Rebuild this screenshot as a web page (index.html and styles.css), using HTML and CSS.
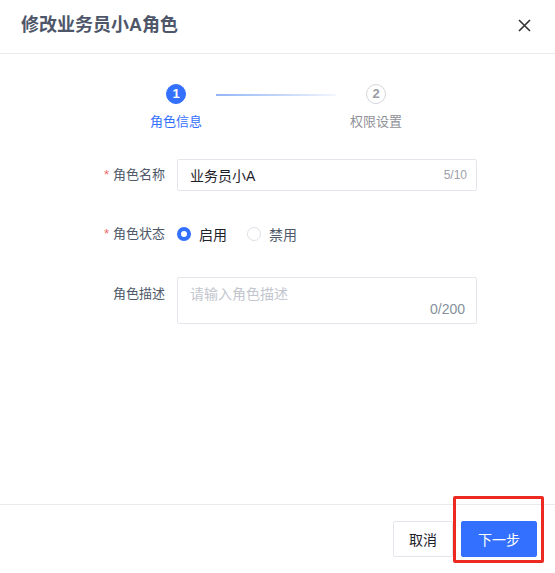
FILE: index.html
```html
<!DOCTYPE html>
<html lang="zh-CN">
<head>
<meta charset="utf-8">
<title>修改业务员小A角色</title>
<link rel="stylesheet" href="styles.css">
</head>
<body>
<div class="dialog">
  <header class="dlg-header">
    <h1 class="dlg-title">修改业务员小A角色</h1>
    <button class="dlg-close" aria-label="关闭">
      <svg width="13" height="13" viewBox="0 0 13 13"><path d="M1 1L12 12M12 1L1 12" stroke="#333" stroke-width="1.6" fill="none"/></svg>
    </button>
  </header>

  <div class="steps">
    <div class="step active">
      <span class="step-dot">1</span>
      <span class="step-label">角色信息</span>
    </div>
    <div class="step-line"></div>
    <div class="step">
      <span class="step-dot">2</span>
      <span class="step-label">权限设置</span>
    </div>
  </div>

  <div class="form">
    <div class="row row-name">
      <label class="lbl"><span class="req">*</span>角色名称</label>
      <div class="input">
        <span class="input-text">业务员小A</span>
        <span class="count">5/10</span>
      </div>
    </div>
    <div class="row row-status">
      <label class="lbl"><span class="req">*</span>角色状态</label>
      <div class="radios">
        <span class="radio checked"><i class="dot"></i>启用</span>
        <span class="radio"><i class="dot"></i>禁用</span>
      </div>
    </div>
    <div class="row row-desc">
      <label class="lbl lbl-top">角色描述</label>
      <div class="textarea">
        <span class="placeholder">请输入角色描述</span>
        <span class="count-lg">0/200</span>
      </div>
    </div>
  </div>

  <footer class="dlg-footer">
    <button class="btn btn-default">取消</button>
    <button class="btn btn-primary">下一步</button>
    <span class="highlight"></span>
  </footer>
</div>
</body>
</html>
```

FILE: styles.css
```css
* { box-sizing: border-box; }
html, body { margin: 0; padding: 0; background: #fff; }
body {
  font-family: "Liberation Sans", "Noto Sans CJK SC", sans-serif;
  color: #1d2129;
}
.dialog {
  width: 555px;
  height: 573px;
  display: flex;
  flex-direction: column;
  background: #fff;
}
.dlg-header {
  height: 54px;
  border-bottom: 1px solid #e9eaee;
  display: flex;
  align-items: center;
  justify-content: space-between;
  padding: 0 24px 3px 21px;
}
.dlg-title {
  margin: 0;
  font-size: 18px;
  line-height: 24px;
  font-weight: 700;
  color: #4e566a;
}
.dlg-close {
  border: 0;
  background: none;
  padding: 0;
  width: 13px;
  height: 13px;
  display: flex;
  margin-top: 1px;
}

.steps {
  display: flex;
  justify-content: center;
  align-items: flex-start;
  margin-top: 30px;
  padding-right: 3px;
}
.step {
  width: 80px;
  display: flex;
  flex-direction: column;
  align-items: center;
}
.step-dot {
  width: 20px;
  height: 20px;
  border-radius: 50%;
  border: 1px solid #d4d6db;
  color: #9a9ca3;
  font-size: 13px;
  font-weight: 700;
  line-height: 18px;
  text-align: center;
}
.step.active .step-dot {
  background: #3370ff;
  border-color: #3370ff;
  color: #fff;
}
.step-label {
  margin-top: 9px;
  font-size: 13px;
  line-height: 18px;
  color: #8f9198;
}
.step.active .step-label { color: #3370ff; }
.step-line {
  width: 120px;
  height: 2px;
  margin-top: 10px;
  background: linear-gradient(90deg, #94b6f7 0%, #c9daf9 60%, #f3f6fd 100%);
}

.form {
  margin-top: 28px;
  display: flex;
  flex-direction: column;
}
.row {
  display: grid;
  grid-template-columns: 165px 300px;
  column-gap: 12px;
  align-items: center;
}
.row-status { margin-top: 27px; height: 32px; }
.row-desc { margin-top: 27px; align-items: start; }
.lbl {
  text-align: right;
  font-size: 13px;
  line-height: 18px;
  color: #4e5969;
}
.lbl-top { margin-top: 8px; }
.req {
  color: #f26a6a;
  margin-right: 4px;
}
.input {
  height: 32px;
  border: 1px solid #e5e6eb;
  border-radius: 2px;
  display: flex;
  align-items: center;
  justify-content: space-between;
  padding: 0 9px 0 12px;
}
.input-text {
  font-size: 14px;
  color: #1d2129;
}
.count {
  font-size: 12px;
  color: #9ca0a8;
}
.radios {
  display: flex;
  align-items: center;
  gap: 20px;
}
.radio {
  display: flex;
  align-items: center;
  font-size: 14px;
  color: #1d2129;
}
.radio + .radio { color: #4e5969; }
.dot {
  width: 14px;
  height: 14px;
  border-radius: 50%;
  border: 1px solid #dcdfe6;
  margin-right: 8px;
  background: #fff;
}
.radio.checked .dot {
  border: 4px solid #3370ff;
}
.textarea {
  height: 47px;
  border: 1px solid #e5e6eb;
  border-radius: 2px;
  display: flex;
  flex-direction: column;
  padding: 6px 11px 0 12px;
}
.placeholder {
  font-size: 14px;
  line-height: 20px;
  color: #c2c6ce;
}
.count-lg {
  align-self: flex-end;
  font-size: 14px;
  line-height: 20px;
  color: #86909c;
  margin-top: -5px;
}

.dlg-footer {
  margin-top: auto;
  height: 69px;
  border-top: 1px solid #e9eaee;
  display: flex;
  justify-content: flex-end;
  align-items: flex-start;
  padding: 16px 18px 0 0;
  gap: 8px;
  position: relative;
}
.btn {
  height: 36px;
  font-family: inherit;
  font-size: 14px;
  border-radius: 2px;
  cursor: pointer;
}
.btn-default {
  width: 60px;
  background: #fff;
  border: 1px solid #e5e6eb;
  color: #1d2129;
}
.btn-primary {
  width: 76px;
  background: #3370ff;
  border: 1px solid #3370ff;
  color: #fff;
}
.highlight {
  position: absolute;
  left: 453px;
  top: -9px;
  width: 91px;
  height: 67px;
  border: 3px solid #ec2a22;
  border-radius: 2px;
  pointer-events: none;
}
```
